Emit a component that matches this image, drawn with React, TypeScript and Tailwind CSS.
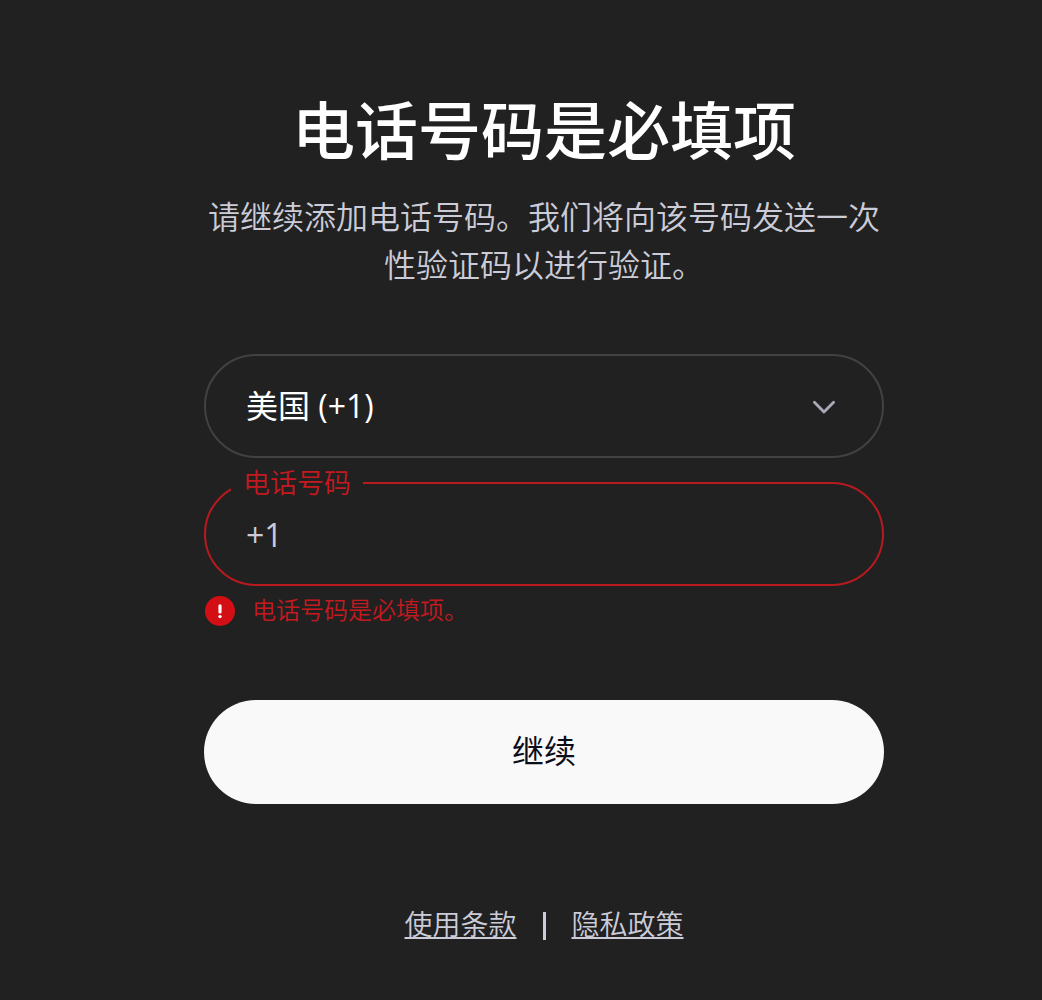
import { useState } from 'react';

const countries = [
  { code: 'US', label: '美国 (+1)' },
  { code: 'GB', label: '英国 (+44)' },
  { code: 'JP', label: '日本 (+81)' },
  { code: 'SG', label: '新加坡 (+65)' },
];

const links = [
  { href: '#terms', label: '使用条款' },
  { href: '#privacy', label: '隐私政策' },
];

function ChevronIcon() {
  return (
    <svg
      className="pointer-events-none absolute right-12 top-1/2 h-4 w-6 -translate-y-1/2 text-[#a9a9b8]"
      viewBox="0 0 24 16"
      fill="none"
      stroke="currentColor"
      strokeWidth="2.8"
      strokeLinecap="round"
      strokeLinejoin="round"
      aria-hidden
    >
      <path d="M2.4 4.2 12 14 21.6 4.2" />
    </svg>
  );
}

function ErrorIcon() {
  return (
    <svg className="h-8 w-8 shrink-0" viewBox="0 0 32 32" aria-hidden>
      <circle cx="16" cy="16" r="15" fill="#d30f15" />
      <path d="M16 10.8v6.2" stroke="#fff" strokeWidth="3.2" strokeLinecap="round" />
      <circle cx="16" cy="21.6" r="1.7" fill="#fff" />
    </svg>
  );
}

export default function App() {
  const [country, setCountry] = useState('US');
  const [phone, setPhone] = useState('+1');

  return (
    <main className="min-h-screen bg-[#212121] pb-8 pl-[50px] pr-1 pt-21 font-['Liberation_Sans','Noto_Sans_CJK_SC',sans-serif] text-[#cbccd8]">
      <div className="mx-auto flex max-w-170 flex-col">
        <h1 className="text-center text-[63px] font-medium leading-24 text-white">
          电话号码是必填项
        </h1>
        <p className="mt-[14px] text-center text-[32px] font-[350] leading-12">
          请继续添加电话号码。我们将向该号码发送一次性验证码以进行验证。
        </p>

        <form className="mt-16 flex flex-col" onSubmit={(e) => e.preventDefault()}>
          <div className="relative">
            <select
              aria-label="国家/地区"
              value={country}
              onChange={(e) => setCountry(e.target.value)}
              className="h-26 w-full appearance-none rounded-full border-2 border-[#424242] bg-[#212121] px-10 font-['Open_Sans','Noto_Sans_CJK_SC',sans-serif] text-[32px] text-white outline-none"
            >
              {countries.map((c) => (
                <option key={c.code} value={c.code}>
                  {c.label}
                </option>
              ))}
            </select>
            <ChevronIcon />
          </div>

          <div className="relative mt-6">
            <input
              id="phone"
              type="tel"
              value={phone}
              onChange={(e) => setPhone(e.target.value)}
              aria-invalid
              aria-describedby="phone-error"
              className="h-26 w-full rounded-full border-2 border-[#b91a1f] bg-transparent px-10 font-['Open_Sans','Noto_Sans_CJK_SC',sans-serif] text-[32px] outline-none"
            />
            <label
              htmlFor="phone"
              className="absolute -top-4 left-[27px] bg-[#212121] px-3 text-[27px] font-[350] leading-9 text-[#c4191f]"
            >
              电话号码
            </label>
          </div>

          <div id="phone-error" className="mt-[9px] flex items-center gap-4 text-2xl font-[350] text-[#c4191f]">
            <ErrorIcon />
            <span>电话号码是必填项。</span>
          </div>

          <button
            type="submit"
            className="mt-[73px] h-26 rounded-full bg-[#f9f9f9] text-[32px] text-[#0d0d1a]"
          >
            继续
          </button>
        </form>

        <nav className="mt-25 flex items-center justify-center gap-[26px] text-[28px] font-[350] leading-11">
          <a href={links[0].href} className="underline">
            {links[0].label}
          </a>
          <span className="h-7 w-[3px] bg-[#cbccd8]" />
          <a href={links[1].href} className="underline">
            {links[1].label}
          </a>
        </nav>
      </div>
    </main>
  );
}
